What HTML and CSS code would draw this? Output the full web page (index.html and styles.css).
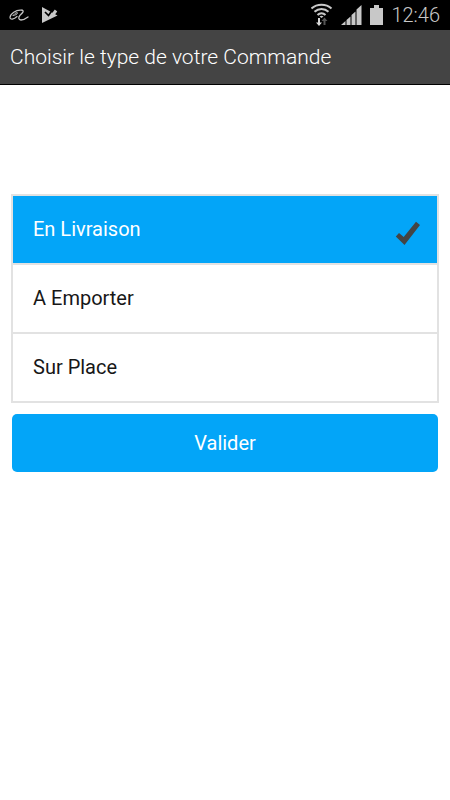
FILE: index.html
```html
<!DOCTYPE html>
<html lang="fr">
<head>
<meta charset="utf-8">
<meta name="viewport" content="width=device-width, initial-scale=1">
<title>Choisir le type de votre Commande</title>
<link rel="stylesheet" href="styles.css">
</head>
<body>
<div class="status-bar">
  <div class="status-group notifications">
    <svg width="20" height="12" viewBox="0 0 20 12" fill="none" stroke="#c4c4c4" stroke-linecap="round" aria-hidden="true">
      <path d="M13 1.200C7 .2 1 5 1 8.500c0 2.500 4 2 7-1" stroke-width="1.200"/>
      <path d="M4 6.500c2 0 4.500-1.500 4.500-2.500S6 4 5 5.500" stroke-width="1"/>
      <path d="M13 1.200c2.500.5.5 3-2 5C9 8.500 9.500 11 12 11c2.500 0 5-1.500 7-3" stroke-width="1.300"/>
    </svg>
    <svg width="17" height="18" viewBox="0 0 17 18" aria-hidden="true">
      <path d="M1 1l15.500 8.500L1 17z" fill="#c8c8c8"/>
      <path d="M11 10l4-5.500" fill="none" stroke="#c8c8c8" stroke-width="3"/>
      <path d="M4 6l3.500 3.500L12.500 2.500" fill="none" stroke="#000" stroke-width="1.700"/>
    </svg>
  </div>
  <div class="status-group">
    <svg width="22" height="24" viewBox="0 0 22 24" fill="none" aria-hidden="true">
      <g stroke="#c8c8c8" stroke-width="2">
        <path d="M.5 5.500c5.500-5 14.500-5 20 0"/>
        <path d="M3.500 8.800c4-3.700 10-3.700 14 0"/>
        <path d="M6.500 12c2.300-2.200 5.700-2.200 8 0"/>
      </g>
      <path d="M8.500 13.500q2-1.500 4 0l-2 1.500z" fill="#c8c8c8"/>
      <path d="M7 15h2v4.500h2L8 23l-3-3.500h2z" fill="#d8d8d8"/>
      <path d="M12.500 22h2v-4h2l-3-3.500-3 3.500h2z" fill="#555"/>
    </svg>
    <svg width="21" height="20" viewBox="0 0 21 20" fill="#c8c8c8" aria-hidden="true">
      <path d="M0 20l4.500-4v4zM5.500 20v-5L9.500 11.500V20zM10.500 20V10l4-3.500V20zM15.500 20V4.500L20.500 0v20z"/>
    </svg>
    <svg width="13" height="20" viewBox="0 0 13 20" fill="#c8c8c8" aria-hidden="true">
      <path d="M4 0h5v3h4v17H0V3h4z"/>
    </svg>
    <time class="clock">12:46</time>
  </div>
</div>
<header class="title-bar">
  <h1>Choisir le type de votre Commande</h1>
</header>
<main>
  <form class="order-form">
    <div class="options" role="radiogroup" aria-label="Type de commande">
      <label class="option">
        <input type="radio" name="type" value="livraison" checked>
        <span>En Livraison</span>
        <svg class="check" width="26" height="24" viewBox="0 0 26 24" aria-hidden="true"><path d="M.8 15.500L4 12l4.700 4L21 .8l4 3.200L9.500 24z"/></svg>
      </label>
      <label class="option">
        <input type="radio" name="type" value="emporter">
        <span>A Emporter</span>
        <svg class="check" width="26" height="24" viewBox="0 0 26 24" aria-hidden="true"><path d="M.8 15.500L4 12l4.700 4L21 .8l4 3.200L9.500 24z"/></svg>
      </label>
      <label class="option">
        <input type="radio" name="type" value="place">
        <span>Sur Place</span>
        <svg class="check" width="26" height="24" viewBox="0 0 26 24" aria-hidden="true"><path d="M.8 15.500L4 12l4.700 4L21 .8l4 3.200L9.500 24z"/></svg>
      </label>
    </div>
    <button class="submit" type="button">Valider</button>
  </form>
</main>
</body>
</html>
```
FILE: styles.css
```css
* {
  box-sizing: border-box;
}

body {
  margin: 0;
  background: #fff;
  color: #171717;
  font-family: Roboto, "Liberation Sans", sans-serif;
  font-size: 20px;
  line-height: 24px;
}

.status-bar {
  display: flex;
  justify-content: space-between;
  align-items: center;
  height: 30px;
  padding: 0 10px 0 9px;
  background: #000;
}

.status-group {
  display: flex;
  align-items: center;
  gap: 8px;
}

.notifications {
  gap: 12px;
}

.clock {
  color: #c8c8c8;
  font-weight: 300;
}

.title-bar {
  padding: 14px 10px;
  background: #444;
  border-bottom: 1px solid #000;
}

.title-bar h1 {
  margin: 0;
  color: #fff;
  font-size: 21px;
  font-weight: 300;
  line-height: 26px;
}

.order-form {
  display: flex;
  flex-direction: column;
  gap: 11px;
  padding: 109px 11px 0;
}

.options {
  border: 2px solid #e2e2e2;
  border-bottom: 0;
}

.option {
  display: flex;
  align-items: center;
  justify-content: space-between;
  padding: 21px 16px 22px 20px;
  border-bottom: 2px solid #e2e2e2;
}

.option input {
  position: absolute;
  opacity: 0;
}

.option:has(input:checked) {
  background: #03a5f8;
  background-clip: padding-box;
  color: #fff;
}

.check {
  visibility: hidden;
  margin-bottom: -8px;
  fill: #444;
}

.option input:checked ~ .check {
  visibility: visible;
}

.submit {
  margin: 0 1px;
  padding: 17px;
  border: 0;
  border-radius: 5px;
  background: #03a5f8;
  color: #fff;
  font: inherit;
}
```
